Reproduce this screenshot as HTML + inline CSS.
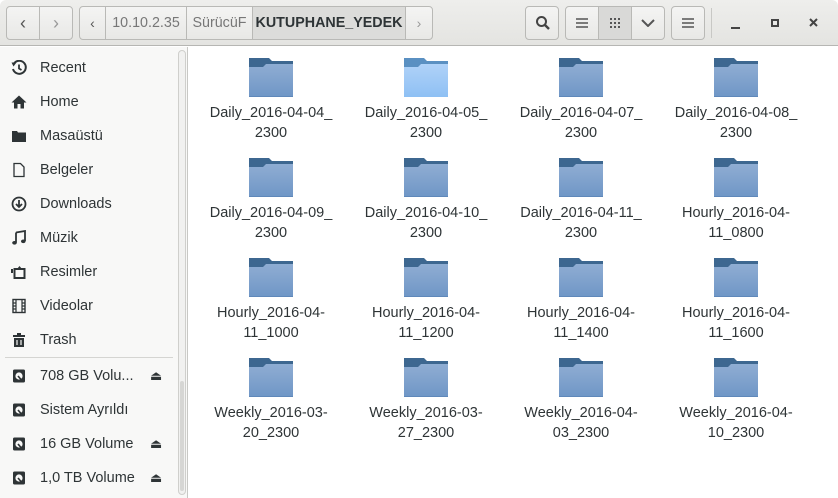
<!DOCTYPE html>
<html><head><meta charset="utf-8"><style>
*{box-sizing:border-box;margin:0;padding:0}
body{width:838px;height:498px;overflow:hidden;background:#fff;font-family:"Liberation Sans","DejaVu Sans",sans-serif;font-size:14.5px;color:#2e3436;position:relative}
.hdr{position:absolute;left:0;top:0;width:838px;height:46px;background:linear-gradient(#eeeeec,#e4e4e1);border-bottom:1px solid #b6b6b3;border-radius:6px 6px 0 0;font-size:14.3px}
.btn{position:absolute;top:6px;height:34px;border:1px solid #b9b9b6;border-radius:4px;background:linear-gradient(#f4f4f3,#e8e8e6)}
.seg{position:absolute;top:0;height:32px;border-right:1px solid #b9b9b6;display:flex;align-items:center;justify-content:center;color:#555}
.side{position:absolute;left:0;top:47px;width:188px;height:451px;background:#f8f8f7;border-right:1px solid #c8c8c5}
.item{position:absolute;left:0;width:175px;height:34px;display:flex;align-items:center}
.item .ic{position:absolute;left:11px;width:16px;height:16px}
.item span{position:absolute;left:40px;color:#2e3436}
.ej{position:absolute;left:150px;font-size:13px}
.sb{position:absolute;left:178px;top:3px;width:8px;height:445px;border:1px solid #cfcfcc;border-radius:4px;background:#f1f1f0}
.sb i{position:absolute;left:1px;top:330px;width:4px;height:110px;background:#d6d6d4;border-radius:2px}
.f{position:absolute;width:150px;text-align:center;line-height:20px;color:#2e3436}
.f svg{display:block;margin:0 auto 6px}
</style></head><body>
<div class="hdr">
 <div class="btn" style="left:6px;width:67px"><div class="seg" style="left:0;width:33px;font-size:18px">&#x2039;</div><div class="seg" style="left:33px;width:32px;border:none;color:#999;font-size:18px">&#x203A;</div></div>
 <div class="btn" style="left:79px;width:354px">
  <div class="seg" style="left:0;width:26px;font-size:14px">&#x2039;</div>
  <div class="seg" style="left:26px;width:81px;color:#777">10.10.2.35</div>
  <div class="seg" style="left:107px;width:66px;color:#777">SürücüF</div>
  <div class="seg" style="left:173px;width:153px;background:#dcdcda;color:#2e3436;font-weight:bold">KUTUPHANE_YEDEK</div>
  <div class="seg" style="left:326px;width:26px;border:none;color:#999;font-size:14px">&#x203A;</div>
 </div>
 <div class="btn" style="left:525px;width:34px"><svg style="position:absolute;left:9px;top:8px" width="16" height="16"><circle cx="6.5" cy="6.5" r="4.5" fill="none" stroke="#444" stroke-width="2"/><path d="M10 10l4 4" stroke="#444" stroke-width="2.4"/></svg></div>
 <div class="btn" style="left:565px;width:100px">
  <div class="seg" style="left:0;width:33px"><svg width="12" height="10"><path d="M0 1h12M0 5h12M0 9h12" stroke="#555" stroke-width="1.6"/></svg></div>
  <div class="seg" style="left:33px;width:33px;background:#d9d9d7"><svg width="10" height="10" fill="#555"><rect x="0" y="0" width="2" height="2"/><rect x="4" y="0" width="2" height="2"/><rect x="8" y="0" width="2" height="2"/><rect x="0" y="4" width="2" height="2"/><rect x="4" y="4" width="2" height="2"/><rect x="8" y="4" width="2" height="2"/><rect x="0" y="8" width="2" height="2"/><rect x="4" y="8" width="2" height="2"/><rect x="8" y="8" width="2" height="2"/></svg></div>
  <div class="seg" style="left:66px;width:32px;border:none"><svg width="14" height="8"><path d="M1 1l6 6 6-6" fill="none" stroke="#555" stroke-width="2"/></svg></div>
 </div>
 <div class="btn" style="left:671px;width:34px"><svg style="position:absolute;left:10px;top:11px" width="12" height="10"><path d="M0 1h12M0 5h12M0 9h12" stroke="#555" stroke-width="1.6"/></svg></div>
 <div style="position:absolute;left:711px;top:8px;width:1px;height:30px;background:#c8c8c5"></div>
 <div style="position:absolute;left:731px;top:27px;width:9px;height:2px;background:#444"></div>
 <div style="position:absolute;left:771px;top:19px;width:8px;height:8px;border:2px solid #444"></div>
 <svg style="position:absolute;left:809px;top:18px" width="9" height="9"><path d="M1 1l7 7M8 1l-7 7" stroke="#444" stroke-width="2"/></svg>
</div>
<div class="side">
 <div class="sb"><i></i></div>
 <div class="item" style="top:4px"><svg class="ic" viewBox="0 0 16 16"><path d="M3 3.5A6.5 6.5 0 1 1 2 9" fill="none" stroke="#2e3436" stroke-width="2"/><path d="M0.5 2.5l5 0-3 4z" fill="#2e3436"/><path d="M8 4.5v4l2.5 1.5" fill="none" stroke="#2e3436" stroke-width="1.8"/></svg><span>Recent</span></div>
 <div class="item" style="top:38px"><svg class="ic" viewBox="0 0 16 16"><path d="M8 1.5L0.5 8.5h2.5v6h10v-6h2.5z" fill="#2e3436"/><rect x="6.5" y="10" width="3" height="4.5" fill="#f8f8f7"/></svg><span>Home</span></div>
 <div class="item" style="top:72px"><svg class="ic" viewBox="0 0 16 16"><path d="M1 3h5l1 1.5h8V14H1z" fill="#2e3436"/></svg><span>Masaüstü</span></div>
 <div class="item" style="top:106px"><svg class="ic" viewBox="0 0 16 16"><path d="M3 1.5h6.5l3.5 3.5v9.5H3z" fill="none" stroke="#2e3436" stroke-width="1.3"/></svg><span>Belgeler</span></div>
 <div class="item" style="top:140px"><svg class="ic" viewBox="0 0 16 16"><circle cx="8" cy="8" r="6.5" fill="none" stroke="#2e3436" stroke-width="1.8"/><path d="M8 4v6M5 8l3 3 3-3" fill="none" stroke="#2e3436" stroke-width="1.8"/></svg><span>Downloads</span></div>
 <div class="item" style="top:174px"><svg class="ic" viewBox="0 0 16 16"><path d="M5 2.5l9-1.5v10" fill="none" stroke="#2e3436" stroke-width="1.8"/><path d="M5 2.5v10" stroke="#2e3436" stroke-width="1.8"/><ellipse cx="3.5" cy="12.8" rx="2.3" ry="1.8" fill="#2e3436"/><ellipse cx="12.3" cy="11.3" rx="2.3" ry="1.8" fill="#2e3436"/></svg><span>Müzik</span></div>
 <div class="item" style="top:208px"><svg class="ic" viewBox="0 0 16 16"><rect x="3.5" y="5" width="10" height="9" fill="none" stroke="#2e3436" stroke-width="2"/><path d="M6 5l2.5-3 2.5 3" fill="#2e3436"/><rect x="0" y="5" width="2" height="4" fill="#2e3436"/></svg><span>Resimler</span></div>
 <div class="item" style="top:242px"><svg class="ic" viewBox="0 0 16 16"><rect x="2" y="1.5" width="12" height="13" fill="none" stroke="#2e3436" stroke-width="1.4"/><path d="M5 1.5v13M11 1.5v13M2 8h3M11 8h3M2 5h3M11 5h3M2 11h3M11 11h3" stroke="#2e3436" stroke-width="1.2"/></svg><span>Videolar</span></div>
 <div class="item" style="top:276px"><svg class="ic" viewBox="0 0 16 16"><rect x="2" y="3" width="12" height="2" fill="#2e3436"/><rect x="6" y="1" width="4" height="2" fill="#2e3436"/><path d="M3 6h10v9H3z" fill="#2e3436"/><path d="M6 8v5M10 8v5" stroke="#f8f8f7" stroke-width="1.2"/></svg><span>Trash</span></div>
 <div style="position:absolute;left:5px;top:310px;width:168px;height:1px;background:#d5d5d2"></div>
 <div class="item" style="top:312px"><svg class="ic" viewBox="0 0 16 16"><rect x="2" y="1.5" width="12" height="13" rx="1.5" fill="#2e3436"/><circle cx="8" cy="8" r="3.6" fill="#f8f8f7"/><path d="M7 8l3 3.5" stroke="#2e3436" stroke-width="1.6"/></svg><span>708 GB Volu...</span><b class="ej">⏏</b></div>
 <div class="item" style="top:346px"><svg class="ic" viewBox="0 0 16 16"><rect x="2" y="1.5" width="12" height="13" rx="1.5" fill="#2e3436"/><circle cx="8" cy="8" r="3.6" fill="#f8f8f7"/><path d="M7 8l3 3.5" stroke="#2e3436" stroke-width="1.6"/></svg><span>Sistem Ayrıldı</span></div>
 <div class="item" style="top:380px"><svg class="ic" viewBox="0 0 16 16"><rect x="2" y="1.5" width="12" height="13" rx="1.5" fill="#2e3436"/><circle cx="8" cy="8" r="3.6" fill="#f8f8f7"/><path d="M7 8l3 3.5" stroke="#2e3436" stroke-width="1.6"/></svg><span>16 GB Volume</span><b class="ej">⏏</b></div>
 <div class="item" style="top:414px"><svg class="ic" viewBox="0 0 16 16"><rect x="2" y="1.5" width="12" height="13" rx="1.5" fill="#2e3436"/><circle cx="8" cy="8" r="3.6" fill="#f8f8f7"/><path d="M7 8l3 3.5" stroke="#2e3436" stroke-width="1.6"/></svg><span>1,0 TB Volume</span><b class="ej">⏏</b></div>
</div>
<svg width="0" height="0" style="position:absolute"><defs>
<linearGradient id="g" x1="0" y1="0" x2="0" y2="1"><stop offset="0" stop-color="#8fadd3"/><stop offset="1" stop-color="#6f96c6"/></linearGradient>
<linearGradient id="h" x1="0" y1="0" x2="0" y2="1"><stop offset="0" stop-color="#b0d2f8"/><stop offset="1" stop-color="#8ec0f4"/></linearGradient>
<g id="fo"><path d="M0 1h20l3 3h21v10H0z" fill="#3d6790"/><path d="M0 10h14l3-3h27v33H0z" fill="url(#g)"/><path d="M0 39h44v1H0z" fill="#5f88ba"/></g>
<g id="fs"><path d="M0 1h20l3 3h21v10H0z" fill="#5a90c2"/><path d="M0 10h14l3-3h27v33H0z" fill="url(#h)"/></g>
</defs></svg>
<div id="grid"></div>
<script>
var n=[["Daily_2016-04-04_","2300"],["Daily_2016-04-05_","2300"],["Daily_2016-04-07_","2300"],["Daily_2016-04-08_","2300"],
["Daily_2016-04-09_","2300"],["Daily_2016-04-10_","2300"],["Daily_2016-04-11_","2300"],["Hourly_2016-04-","11_0800"],
["Hourly_2016-04-","11_1000"],["Hourly_2016-04-","11_1200"],["Hourly_2016-04-","11_1400"],["Hourly_2016-04-","11_1600"],
["Weekly_2016-03-","20_2300"],["Weekly_2016-03-","27_2300"],["Weekly_2016-04-","03_2300"],["Weekly_2016-04-","10_2300"]];
var h="";n.forEach(function(t,i){var c=i%4,r=Math.floor(i/4);
h+='<div class="f" style="left:'+(196+c*155)+'px;top:'+(57+r*100)+'px"><svg width="44" height="40"><use href="#'+(i==1?'fs':'fo')+'"/></svg>'+t[0]+'<br>'+t[1]+'</div>';});
document.getElementById("grid").innerHTML=h;
</script>
</body></html>
